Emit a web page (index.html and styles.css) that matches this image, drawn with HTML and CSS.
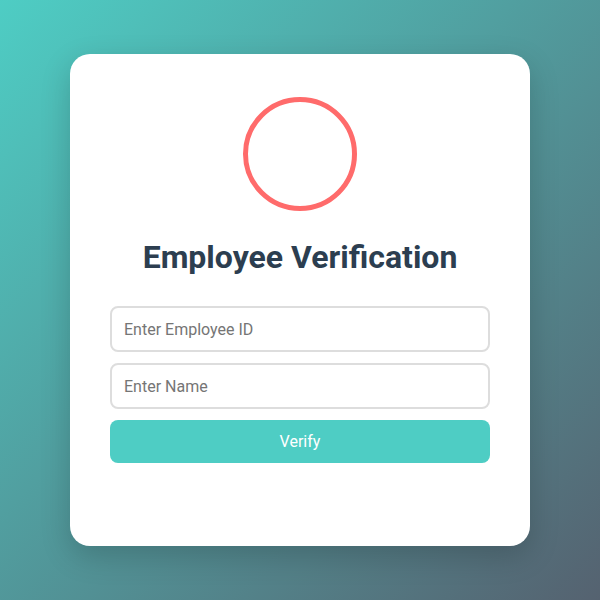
FILE: index.html
```html
<!DOCTYPE html>
<html lang="en">
<head>
<meta charset="utf-8">
<title>Employee Verification</title>
<link rel="stylesheet" href="styles.css">
</head>
<body>
<main class="page">
  <section class="card">
    <div class="avatar"></div>
    <h1 class="title">Employee Verification</h1>
    <form class="form">
      <input class="field" type="text" placeholder="Enter Employee ID">
      <input class="field" type="text" placeholder="Enter Name">
      <button class="btn" type="button">Verify</button>
    </form>
  </section>
</main>
</body>
</html>
```

FILE: styles.css
```css
* { box-sizing: border-box; }
html, body { margin: 0; padding: 0; }
body {
  width: 600px;
  height: 600px;
  font-family: Roboto, "Liberation Sans", sans-serif;
  background: linear-gradient(135deg, #4ecdc4 0%, #556270 100%);
  overflow: hidden;
}
.page {
  height: 600px;
  display: flex;
  align-items: center;
  justify-content: center;
}
.card {
  width: 460px;
  height: 492px;
  background: #fff;
  border-radius: 20px;
  padding: 43px 40px 40px;
  box-shadow: 0 10px 30px rgba(0, 0, 0, 0.18);
  display: flex;
  flex-direction: column;
  align-items: center;
}
.avatar {
  width: 114px;
  height: 114px;
  border: 5px solid #ff6b6b;
  border-radius: 50%;
  flex: none;
}
.title {
  margin: 27px 0 30px;
  font-size: 32px;
  font-weight: 700;
  color: #2c3e50;
  line-height: normal;
}
.form {
  width: 100%;
  display: flex;
  flex-direction: column;
  gap: 11px;
}
.field {
  width: 100%;
  height: 46px;
  padding: 0 12px;
  border: 2px solid #dddddd;
  border-radius: 8px;
  font-family: Roboto, "Liberation Sans", sans-serif;
  font-size: 16px;
  line-height: normal;
  color: #333;
  outline: none;
  background: #fff;
}
.field::placeholder { color: #757575; }
.btn {
  width: 100%;
  height: 43px;
  padding: 0 12px;
  border: none;
  border-radius: 8px;
  background: #4ecdc4;
  color: #fff;
  font-family: Roboto, "Liberation Sans", sans-serif;
  font-size: 16px;
  line-height: normal;
  cursor: pointer;
}
```
